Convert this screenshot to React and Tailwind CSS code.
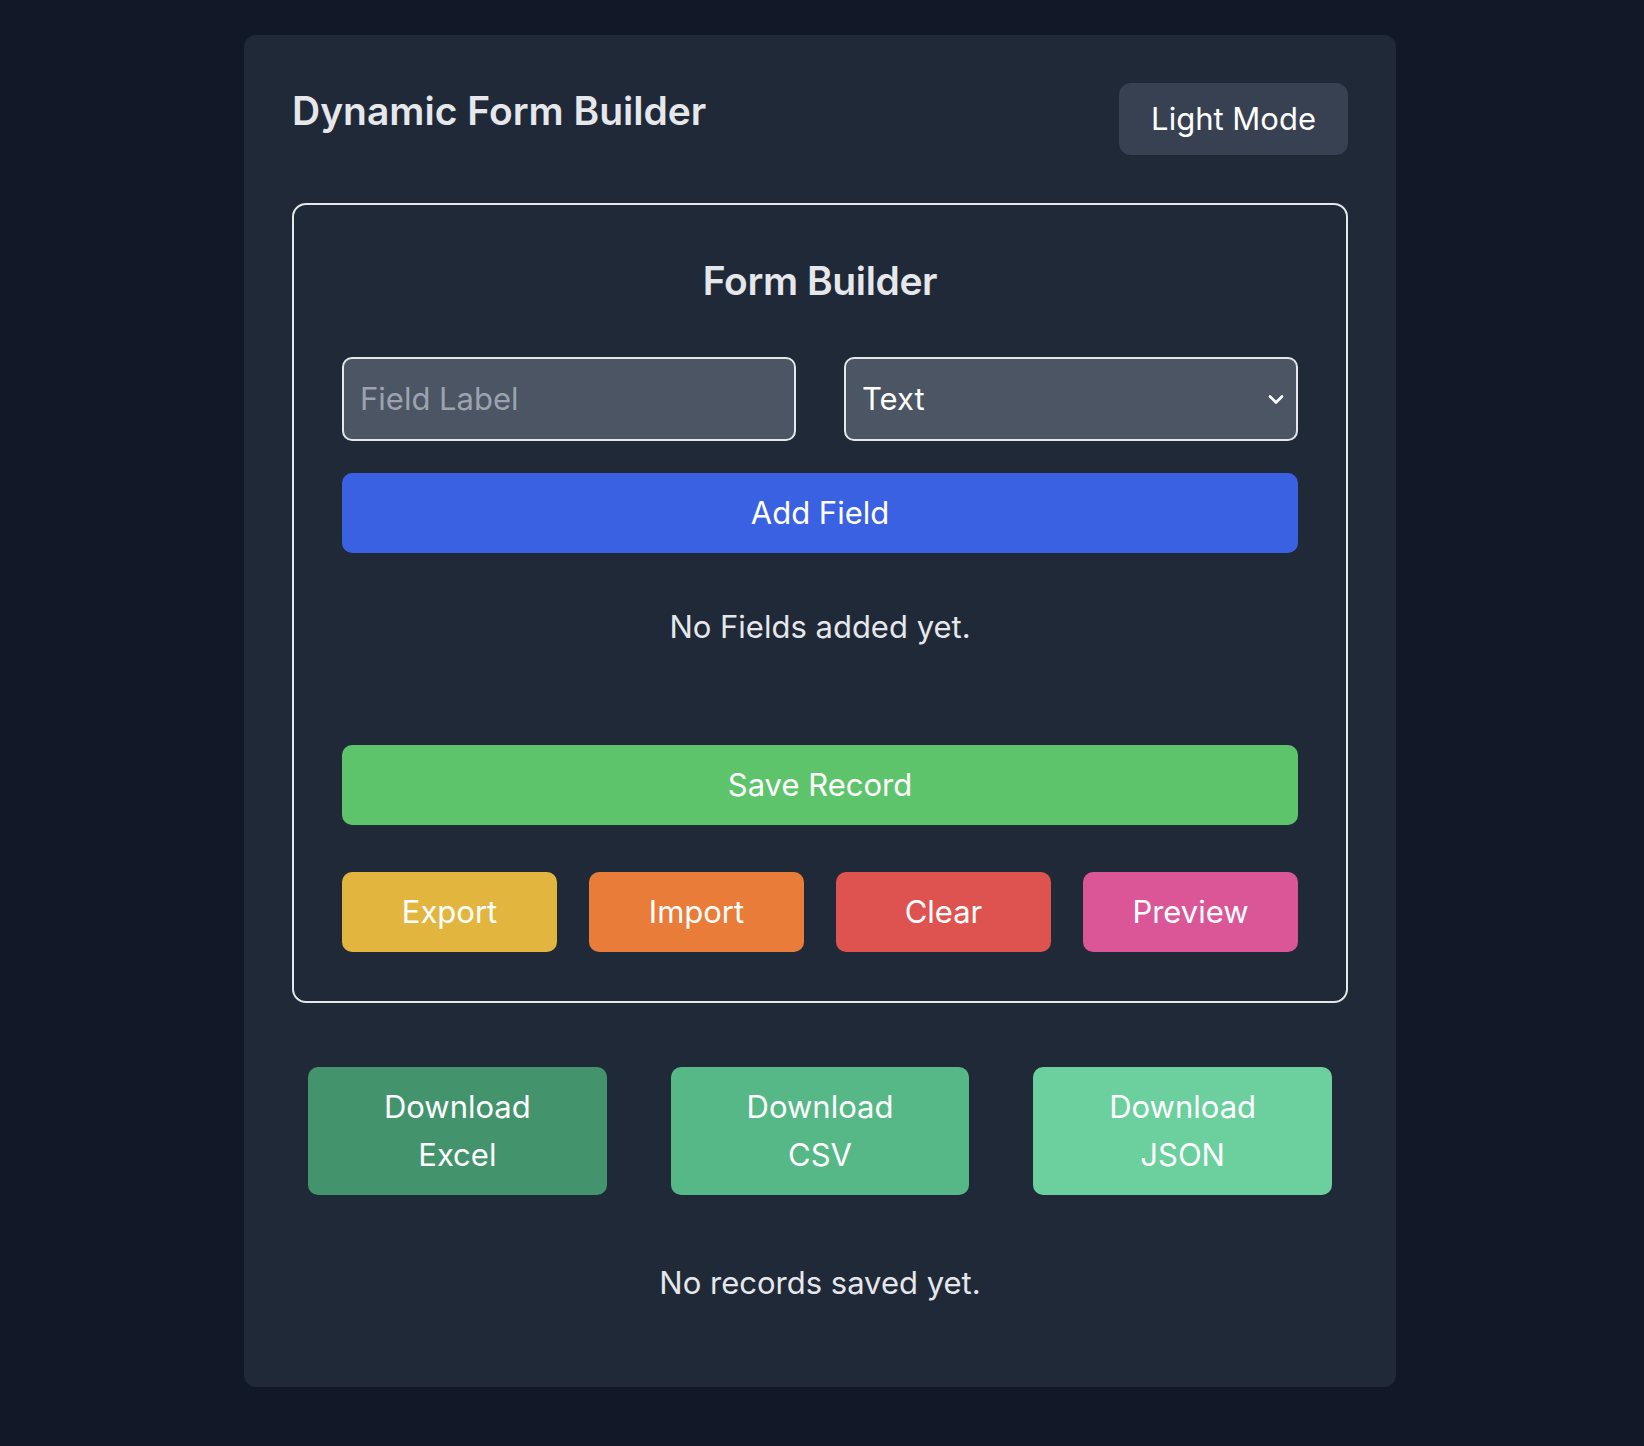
import { useState } from 'react'

export default function App() {
  const [label, setLabel] = useState('')
  const [type, setType] = useState('text')

  return (
    <div className="min-h-screen bg-[#111827] pt-[35px] pr-[4px] pb-[60px]" style={{ fontFamily: 'Inter, "Noto Sans", sans-serif' }}>
      <div className="mx-auto w-[1152px] rounded-[12px] bg-[#1f2937] p-12 pb-[80px]">
        {/* Header */}
        <div className="flex items-start justify-between">
          <h1 className="text-[39px] leading-[56px] font-semibold text-[#e5e7eb]">Dynamic Form Builder</h1>
          <button className="rounded-[12px] bg-[#374151] px-8 py-3 text-[31px] leading-[48px] text-white">
            Light Mode
          </button>
        </div>

        {/* Builder box */}
        <div className="mt-12 rounded-[14px] border-2 border-[#e5e7eb] px-[48px] pt-[48px] pb-[49px]">
          <h2 className="text-center text-[39px] leading-[56px] font-semibold tracking-[-0.4px] text-[#e5e7eb]">Form Builder</h2>

          <div className="mt-12 grid grid-cols-2 gap-12">
            <input
              type="text"
              value={label}
              onChange={(e) => setLabel(e.target.value)}
              placeholder="Field Label"
              className="w-full rounded-[10px] border-2 border-[#e5e7eb] bg-[#4b5563] px-4 py-4 text-[31px] leading-[48px] text-white placeholder:text-[#9ca3af] focus:outline-none"
            />
            <div className="relative">
              <select
                value={type}
                onChange={(e) => setType(e.target.value)}
                className="w-full appearance-none rounded-[10px] border-2 border-[#e5e7eb] bg-[#4b5563] px-4 py-4 text-[31px] leading-[48px] text-white focus:outline-none"
              >
                <option value="text">Text</option>
                <option value="number">Number</option>
                <option value="email">Email</option>
                <option value="date">Date</option>
              </select>
              <svg
                className="pointer-events-none absolute right-[12px] top-1/2 h-[20px] w-[20px] -translate-y-1/2"
                viewBox="0 0 20 20"
                fill="none"
                stroke="white"
                strokeWidth="2.6"
                strokeLinecap="round"
                strokeLinejoin="round"
              >
                <path d="M4 7.5l6 6 6-6" />
              </svg>
            </div>
          </div>

          <button className="mt-8 w-full rounded-[10px] bg-[#3a61e2] py-4 text-[31px] leading-[48px] text-white">
            Add Field
          </button>

          <p className="mt-[50px] text-center text-[31px] leading-[48px] text-[#e5e7eb]">No Fields added yet.</p>

          <button className="mt-[94px] w-full rounded-[10px] bg-[#5ec46c] py-4 text-[31px] leading-[48px] text-white">
            Save Record
          </button>

          <div className="mt-[47px] grid grid-cols-4 gap-8">
            <button className="rounded-[10px] bg-[#e2b63e] py-4 text-[31px] leading-[48px] text-white">Export</button>
            <button className="rounded-[10px] bg-[#e97c38] py-4 text-[31px] leading-[48px] text-white">Import</button>
            <button className="rounded-[10px] bg-[#de534f] py-4 text-[31px] leading-[48px] text-white">Clear</button>
            <button className="rounded-[10px] bg-[#db5697] py-4 text-[31px] leading-[48px] text-white">Preview</button>
          </div>
        </div>

        {/* Downloads */}
        <div className="mt-16 grid grid-cols-3 gap-16 px-4">
          <button className="rounded-[10px] bg-[#43946c] py-4 text-[31px] leading-[48px] text-white">
            Download<br />Excel
          </button>
          <button className="rounded-[10px] bg-[#55b886] py-4 text-[31px] leading-[48px] text-white">
            Download<br />CSV
          </button>
          <button className="rounded-[10px] bg-[#6bd09e] py-4 text-[31px] leading-[48px] text-white">
            Download<br />JSON
          </button>
        </div>

        <p className="mt-16 text-center text-[31px] leading-[48px] text-[#e5e7eb]">No records saved yet.</p>
      </div>
    </div>
  )
}
